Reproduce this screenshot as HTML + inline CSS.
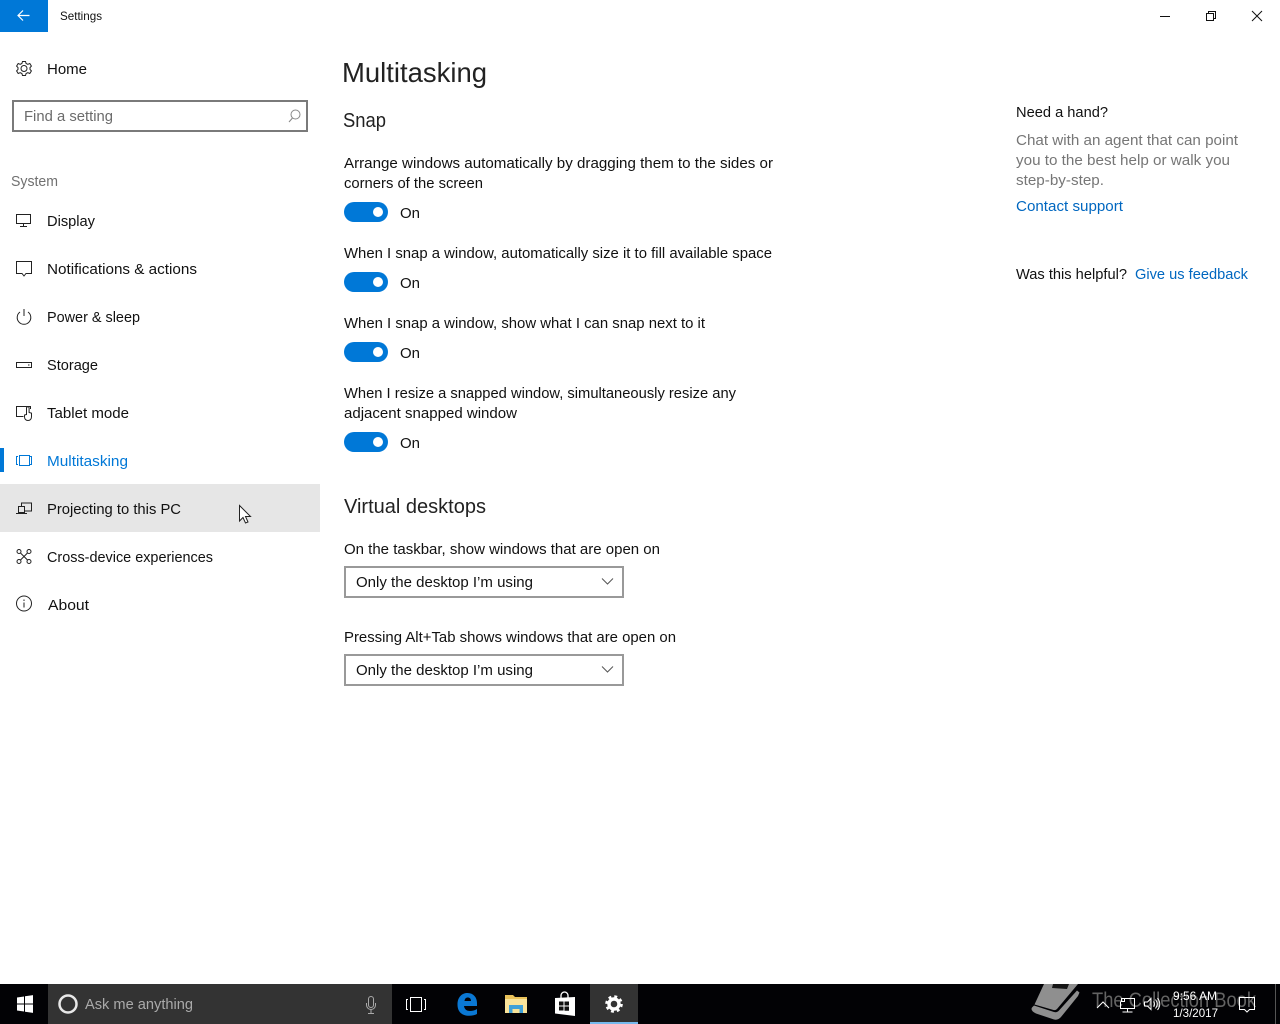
<!DOCTYPE html>
<html><head><meta charset="utf-8"><title>Settings</title>
<style>
html,body{margin:0;padding:0;background:#fff;width:1280px;height:1024px;overflow:hidden}
svg{display:block;position:absolute;left:0;top:0}
text{font-family:"Liberation Sans",sans-serif;font-size:15px;fill:#111}
.i{fill:none;stroke:#222;stroke-width:1}
.t{fill:none;stroke:#fff;stroke-width:1}
</style></head><body>
<svg width="1280" height="1024" viewBox="0 0 1280 1024" xmlns="http://www.w3.org/2000/svg">
<rect width="1280" height="1024" fill="#fff"/>
<!-- title bar -->
<rect width="48" height="32" fill="#0078d7"/>
<path d="M29.500 15.500H18M23 10.500l-5 5 5 5" fill="none" stroke="#fff" stroke-width="1.200"/>
<text x="60" y="20" style="font-size:12px" textLength="42" lengthAdjust="spacingAndGlyphs">Settings</text>
<path d="M1160 16.500h10" stroke="#111" fill="none"/>
<path d="M1206.500 13.500h7v7h-7zM1208.500 13.500v-2h7v7h-2" stroke="#111" fill="none"/>
<path d="M1252 11l10 10M1262 11l-10 10" stroke="#111" fill="none"/>
<!-- sidebar -->
<g class="i"><circle cx="24" cy="68.500" r="3"/><path d="M22.500 61.500h3l.6 2 1.700.8 2-.8 1.600 2.600-1.400 1.500v1.800l1.400 1.500-1.600 2.600-2-.8-1.700.8-.6 2h-3l-.6-2-1.700-.8-2 .8-1.600-2.600 1.400-1.500v-1.800l-1.400-1.500 1.600-2.600 2 .8 1.700-.8z"/></g>
<text x="47" y="74" textLength="40" lengthAdjust="spacingAndGlyphs">Home</text>
<rect x="13" y="101" width="294" height="30" fill="#fff" stroke="#7a7a7a" stroke-width="2"/>
<text x="24" y="121" style="fill:#6b6b6b" textLength="89" lengthAdjust="spacingAndGlyphs">Find a setting</text>
<g fill="none" stroke="#888"><circle cx="295.500" cy="114.500" r="4.500"/><path d="M292.500 118l-3.500 4"/></g>
<text x="11" y="186" style="fill:#707070" textLength="47" lengthAdjust="spacingAndGlyphs">System</text>

<g class="i"><rect x="16.500" y="214.500" width="14" height="9"/><path d="M23.500 223.500v2.500M20 226.500h7"/></g>
<text x="47" y="226" textLength="48" lengthAdjust="spacingAndGlyphs">Display</text>
<path class="i" d="M16.500 261.500h15v12h-5.500l-2 2.500-2-2.500h-5.500z"/>
<text x="47" y="274" textLength="150" lengthAdjust="spacingAndGlyphs">Notifications &amp; actions</text>
<path class="i" d="M20 312a6.800 6.800 0 1 0 8 0M24 309v7"/>
<text x="47" y="322" textLength="93" lengthAdjust="spacingAndGlyphs">Power &amp; sleep</text>
<g class="i"><rect x="16.500" y="362.500" width="15" height="5"/><path d="M28 365h1.500"/></g>
<text x="47" y="370" textLength="51" lengthAdjust="spacingAndGlyphs">Storage</text>
<path class="i" d="M23.500 416.500h-7v-10h14v2.500M26.500 415v-7a1.300 1.300 0 0 1 2.600 0v4.500l2.400.6v3.700c0 2.300-1.400 3.700-3.500 3.700s-3.500-1.400-3.500-3.700v-1.800l2-.5"/>
<text x="47" y="418" textLength="82" lengthAdjust="spacingAndGlyphs">Tablet mode</text>

<rect x="0" y="448" width="4" height="24" fill="#0078d7"/>
<g fill="none" stroke="#0078d7"><rect x="19.500" y="455.500" width="10" height="10"/><path d="M18 456.500h-1.500v8H18M30 456.500h1.500v8H30"/></g>
<text x="47" y="466" style="fill:#0078d7" textLength="81" lengthAdjust="spacingAndGlyphs">Multitasking</text>

<rect x="0" y="484" width="320" height="48" fill="#e6e6e6"/>
<path class="i" d="M21.500 506.500v-3.500h10v8h-6.500M18.500 506.500h6v6h-6zM16 513.500h11"/>
<text x="47" y="514" textLength="134" lengthAdjust="spacingAndGlyphs">Projecting to this PC</text>
<path d="M239.500 505.500v15.500l3.500-3.500 2.500 5.500 2.500-1-2.500-5.500h5z" fill="#fff" stroke="#222"/>

<g class="i"><circle cx="19" cy="551.500" r="2"/><circle cx="29" cy="551.500" r="2"/><circle cx="19" cy="561.500" r="2"/><circle cx="29" cy="561.500" r="2"/><path d="M20.500 553l7 7M27.500 553l-7 7"/></g>
<text x="47" y="562" textLength="166" lengthAdjust="spacingAndGlyphs">Cross-device experiences</text>
<g class="i"><circle cx="24" cy="603.500" r="7.500"/><path d="M24 602.500v5M24 599.500v1.500"/></g>
<text x="48" y="610" textLength="41" lengthAdjust="spacingAndGlyphs">About</text>

<!-- main -->
<text x="342" y="82" style="font-size:28px;fill:#222" textLength="145" lengthAdjust="spacingAndGlyphs">Multitasking</text>
<text x="343" y="127" style="font-size:20px;fill:#222" textLength="43" lengthAdjust="spacingAndGlyphs">Snap</text>
<text x="344" y="168" textLength="429" lengthAdjust="spacingAndGlyphs">Arrange windows automatically by dragging them to the sides or</text>
<text x="344" y="188" textLength="139" lengthAdjust="spacingAndGlyphs">corners of the screen</text>
<rect x="344" y="202" width="44" height="20" rx="10" fill="#0078d7"/><circle cx="378" cy="212" r="5" fill="#fff"/>
<text x="400" y="218" textLength="20" lengthAdjust="spacingAndGlyphs">On</text>
<text x="344" y="258" textLength="428" lengthAdjust="spacingAndGlyphs">When I snap a window, automatically size it to fill available space</text>
<rect x="344" y="272" width="44" height="20" rx="10" fill="#0078d7"/><circle cx="378" cy="282" r="5" fill="#fff"/>
<text x="400" y="288" textLength="20" lengthAdjust="spacingAndGlyphs">On</text>
<text x="344" y="328" textLength="361" lengthAdjust="spacingAndGlyphs">When I snap a window, show what I can snap next to it</text>
<rect x="344" y="342" width="44" height="20" rx="10" fill="#0078d7"/><circle cx="378" cy="352" r="5" fill="#fff"/>
<text x="400" y="358" textLength="20" lengthAdjust="spacingAndGlyphs">On</text>
<text x="344" y="398" textLength="392" lengthAdjust="spacingAndGlyphs">When I resize a snapped window, simultaneously resize any</text>
<text x="344" y="418" textLength="173" lengthAdjust="spacingAndGlyphs">adjacent snapped window</text>
<rect x="344" y="432" width="44" height="20" rx="10" fill="#0078d7"/><circle cx="378" cy="442" r="5" fill="#fff"/>
<text x="400" y="448" textLength="20" lengthAdjust="spacingAndGlyphs">On</text>

<text x="344" y="513" style="font-size:20px;fill:#222" textLength="142" lengthAdjust="spacingAndGlyphs">Virtual desktops</text>
<text x="344" y="554" textLength="316" lengthAdjust="spacingAndGlyphs">On the taskbar, show windows that are open on</text>
<rect x="345" y="567" width="278" height="30" fill="#fff" stroke="#999" stroke-width="2"/>
<text x="356" y="587" textLength="177" lengthAdjust="spacingAndGlyphs">Only the desktop I’m using</text>
<path d="M602 578.500l5.500 5.500 5.500-5.500" fill="none" stroke="#555"/>
<text x="344" y="642" textLength="332" lengthAdjust="spacingAndGlyphs">Pressing Alt+Tab shows windows that are open on</text>
<rect x="345" y="655" width="278" height="30" fill="#fff" stroke="#999" stroke-width="2"/>
<text x="356" y="675" textLength="177" lengthAdjust="spacingAndGlyphs">Only the desktop I’m using</text>
<path d="M602 666.500l5.500 5.500 5.500-5.500" fill="none" stroke="#555"/>

<!-- right -->
<text x="1016" y="117" textLength="92" lengthAdjust="spacingAndGlyphs">Need a hand?</text>
<text x="1016" y="145" style="fill:#767676" textLength="222" lengthAdjust="spacingAndGlyphs">Chat with an agent that can point</text>
<text x="1016" y="165" style="fill:#767676" textLength="214" lengthAdjust="spacingAndGlyphs">you to the best help or walk you</text>
<text x="1016" y="185" style="fill:#767676" textLength="88" lengthAdjust="spacingAndGlyphs">step-by-step.</text>
<text x="1016" y="211" style="fill:#0067c0" textLength="107" lengthAdjust="spacingAndGlyphs">Contact support</text>
<text x="1016" y="279" textLength="111" lengthAdjust="spacingAndGlyphs">Was this helpful?</text>
<text x="1135" y="279" style="fill:#0067c0" textLength="113" lengthAdjust="spacingAndGlyphs">Give us feedback</text>

<!-- taskbar -->
<rect x="0" y="984" width="1280" height="40" fill="#020205"/>
<path d="M17 997.500l7-1v7h-7zM25 996.300l8-1.200v8.400h-8zM17 1004.500h7v7l-7-1zM25 1004.500h8v8.400l-8-1.200z" fill="#fff"/>
<rect x="48" y="984" width="344" height="40" fill="#333"/>
<circle cx="68" cy="1004" r="8.500" fill="none" stroke="#e8e8e8" stroke-width="2.500"/>
<text x="85" y="1009" style="fill:#aaa" textLength="108" lengthAdjust="spacingAndGlyphs">Ask me anything</text>
<g fill="none" stroke="#aaa"><rect x="368.500" y="996.500" width="5" height="11" rx="2.500"/><path d="M366.500 1003v2a4.500 4.500 0 0 0 9 0v-2M371 1010v3M368 1013.500h6"/></g>
<g class="t"><rect x="410.500" y="997.500" width="11" height="14"/><path d="M408 999.500h-1.500v10H408M424 999.500h1.500v10H424"/></g>
<!-- edge -->
<path d="M457.500 1004.500c0-7.500 4.500-11.500 10-11.500 6 0 9.500 4.500 9.500 10v3h-13c.5 3.500 3 5 6 5 2.500 0 5-.7 7-2v5c-2 1.100-4.500 1.800-8 1.800-7 0-11.500-4-11.500-11.300zm7-3.500h6.500c0-2.300-1.300-3.500-3.200-3.500s-3 1.300-3.300 3.500z" fill="#0a78d4" fill-rule="evenodd"/>
<!-- explorer -->
<path d="M505 995h8l2 2h12v3h-22z" fill="#e9c25a"/>
<path d="M505 999h22v14h-22z" fill="#f9e39a"/>
<path d="M509 1013v-8h14v8h-3.500v-4h-7v4z" fill="#3fa0d8"/>
<!-- store -->
<path d="M555 998l20-1v19l-20-2.500z" fill="#fff"/>
<path d="M561 998v-2.500a3.500 3.500 0 0 1 7 0v2.500" fill="none" stroke="#fff" stroke-width="1.300"/>
<path d="M559 1001.500h4.500v4H559zM564.500 1001.500h4.500v4h-4.500zM559 1006.500h4.500v4H559zM564.500 1006.500h4.500v4.200h-4.500z" fill="#111"/>
<!-- settings -->
<rect x="590" y="984" width="48" height="40" fill="#333"/>
<rect x="590" y="1022" width="48" height="2" fill="#76b9ed"/>
<g fill="none" stroke="#fff"><circle cx="614" cy="1004" r="5" stroke-width="3.400"/><circle cx="614" cy="1004" r="7.500" stroke-width="2.600" stroke-dasharray="2.900 3"/></g>
<!-- watermark -->
<clipPath id="cp"><rect x="1000" y="984" width="280" height="40"/></clipPath>
<g clip-path="url(#cp)">
<path d="M1044 984h34l-21 25q-1.500 1.500-3.500 1l-19-5.500z" fill="#8f8f8f"/>
<path d="M1053 984h16l-2 5-15-1z" fill="#161616"/>
<path d="M1034 1005.500l20 6.500q3 .8 5-1.500l18-20 2.500 2-1.500 3.500-17 21q-3 3.500-7 2.500l-18-6q-6-3-4-6z" fill="#8f8f8f"/>
</g>
<text x="1092" y="1007" style="font-size:21px;fill:#636363" textLength="164" lengthAdjust="spacingAndGlyphs">The Collection Book</text>
<!-- tray -->
<path class="t" d="M1097 1008l6-6 6 6"/>
<g class="t"><rect x="1121.500" y="998.500" width="3" height="3"/><path d="M1125 998.500h9.500v10h-14v-7M1127.500 1008.500v3M1122.500 1012h10"/></g>
<g class="t"><path d="M1144.500 1002h3l3.500-3.500v11l-3.500-3.500h-3zM1153.500 1001.500q2 2.500 0 5M1155.500 999.500q3.500 4.500 0 9M1157.500 998q4.500 6 0 12"/></g>
<text x="1173" y="1000" style="font-size:12px;fill:#fff" textLength="44" lengthAdjust="spacingAndGlyphs">9:56 AM</text>
<text x="1173" y="1017" style="font-size:12px;fill:#fff" textLength="45" lengthAdjust="spacingAndGlyphs">1/3/2017</text>
<path class="t" d="M1239.500 997.500h15v12h-5l-2.500 2.500-2.500-2.500h-5z"/>
<rect x="1275" y="984" width="1" height="40" fill="#555"/>
</svg>
</body></html>
